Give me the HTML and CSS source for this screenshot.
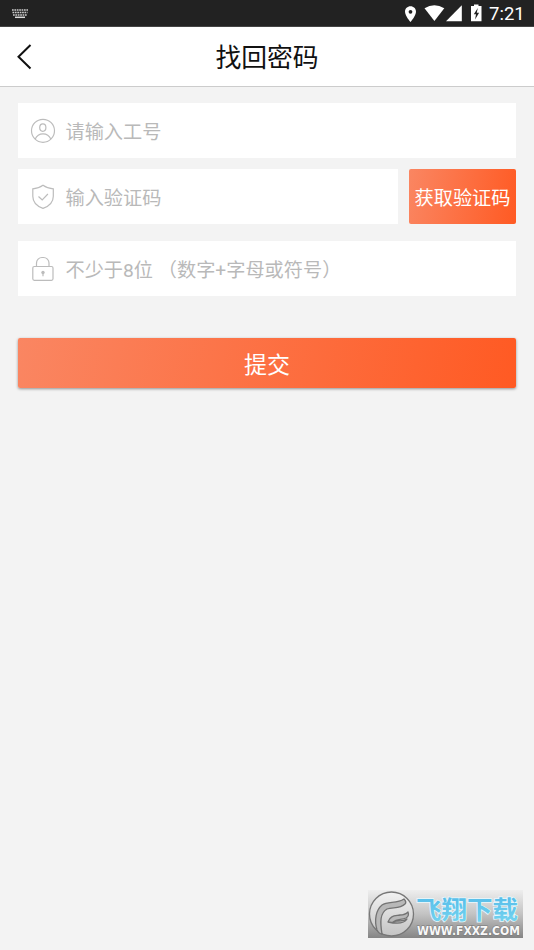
FILE: index.html
```html
<!DOCTYPE html>
<html lang="zh-CN">
<head>
<meta charset="utf-8">
<meta name="viewport" content="width=device-width, initial-scale=1">
<title>找回密码</title>
<link rel="stylesheet" href="styles.css">
</head>
<body>
<div class="status">
  <svg class="keyboard" width="18" height="10" viewBox="0 0 18 10"><path d="M1 1h16M1.500 3.500h15M2 6h14" stroke="#ccc" stroke-width="1.400" stroke-dasharray="1.700 .7"/><path d="M4 8.300h10" stroke="#ddd" stroke-width="1.500"/></svg>
  <svg class="signals" width="82" height="20" viewBox="0 0 82 20" fill="#fff">
    <path fill-rule="evenodd" d="M8.500 3.300c-3.100 0-5.500 2.400-5.500 5.400 0 4 5.500 10.300 5.500 10.300S14 12.700 14 8.700c0-3-2.400-5.400-5.500-5.400zm0 3.600a1.900 1.900 0 1 1 0 3.800 1.900 1.900 0 0 1 0-3.800z"/>
    <path d="M22.500 5.300Q32.300-1 42.300 5.300L32.400 18z"/>
    <path d="M59.800 2.300V18.200H44z"/>
    <path fill-rule="evenodd" d="M69 3h3V1.500h4.500V3h3v15.200H69zM75.800 5l-4 6.300H74l-.9 5.100 4-6.700h-2.300z"/>
  </svg>
  <span class="time">7:21</span>
</div>
<header class="header">
  <svg class="back" width="18" height="28" viewBox="0 0 18 28"><path d="M14.500 2 2.500 13.800l12 11.700" fill="none" stroke="#111" stroke-width="2"/></svg>
  <h1>找回密码</h1>
</header>
<main class="form">
  <div class="field">
    <svg class="icon" viewBox="0 0 26 26"><circle cx="13" cy="12.800" r="11.500"/><ellipse cx="12.800" cy="9.600" rx="3.100" ry="3.700"/><path d="M5.200 21.100c1.500-3.600 4.300-5.300 7.800-5.300s6.300 1.700 7.800 5.300"/></svg>
    <span>请输入工号</span>
  </div>
  <div class="row">
    <div class="field">
      <svg class="icon" viewBox="0 0 26 26"><path d="M13 1.300c3 2.200 6.400 3.300 10.300 3.500v7.400c0 5.600-4.300 10-10.300 12.200C7 22.200 2.800 17.800 2.800 12.200V4.800C6.600 4.600 10 3.500 13 1.300z"/><path d="m8.500 12.500 3.700 3.500 5.700-6"/></svg>
      <span>输入验证码</span>
    </div>
    <button class="code" type="button">获取验证码</button>
  </div>
  <div class="field">
    <svg class="icon" viewBox="0 0 26 26"><rect x="2.800" y="10.500" width="20.200" height="13.800" rx="1.500"/><path d="M6.500 10.500V7a5.500 5.500 0 0 1 5.500-5.500h1.500A5.500 5.500 0 0 1 19 7v3.500M13 17v3.300"/><circle class="keyhole" cx="13" cy="16.500" r="1.700"/></svg>
    <span>不少于8位 （数字+字母或符号）</span>
  </div>
  <button class="submit" type="button">提交</button>
</main>
<svg class="watermark" width="155" height="48" viewBox="0 0 155 48">
  <defs>
    <linearGradient id="plate" x1="0" y1="0" x2="0" y2="1"><stop offset="0" stop-color="#eee"/><stop offset=".5" stop-color="#c3c3c3"/><stop offset="1" stop-color="#858585"/></linearGradient>
    <linearGradient id="disc" x1="0" y1="0" x2="0" y2="1"><stop offset="0" stop-color="#f2f2f2"/><stop offset="1" stop-color="#c4c4c4"/></linearGradient>
    <linearGradient id="blue" x1="0" y1="0" x2="0" y2="1"><stop offset="0" stop-color="#50b8e8"/><stop offset="1" stop-color="#78d6f0"/></linearGradient>
  </defs>
  <rect width="155" height="48" fill="url(#plate)"/>
  <circle cx="23.500" cy="24" r="22" fill="url(#disc)" stroke="#777" stroke-width="1.300"/>
  <g fill="#b8b8b8" stroke="#737373" stroke-width="1.300" stroke-linejoin="round">
    <path d="M9 40C6 30 8 20 14 15c6-4 15-1 22-6 2 2 2 4 1 5-5 5-12 3-18 5-7 4-7 13-5 25-3 0-4-2-5-4z"/>
    <path d="M20 32c2-7 8-6 12-7 4 0 6-1 8-3 1 3 0 5-2 6-5 2-9 1-13 4 6-2 9 0 14-3-3 5-10 5-19 3z"/>
  </g>
  <text class="brand" x="48" y="29" textLength="102" lengthAdjust="spacingAndGlyphs">飞翔下载</text>
  <text class="site" x="49" y="45" textLength="103" lengthAdjust="spacingAndGlyphs">WWW.FXXZ.COM</text>
</svg>
</body>
</html>
```
FILE: styles.css
```css
* { box-sizing: border-box; }

body {
  margin: 0;
  min-height: 950px;
  background: #f3f3f3;
  font-family: Roboto, "Noto Sans CJK SC", sans-serif;
}

.status {
  display: flex;
  align-items: flex-start;
  height: 27px;
  padding: 3px 9px 0 11px;
  background: #222;
  border-bottom: 1px solid #444;
  color: #fff;
}

.keyboard { margin-top: 6px; }
.signals { margin-left: auto; }

.time {
  width: 36px;
  margin-left: 5px;
  font-size: 18.500px;
  line-height: 22px;
  font-weight: 400;
}

.header {
  display: grid;
  grid-template-columns: 18px 1fr 18px;
  align-items: center;
  height: 60px;
  padding: 0 16px;
  background: #fff;
  border-bottom: 1px solid #ccc;
}

.header h1 {
  margin: 0;
  padding-top: 2px;
  font-size: 25.800px;
  font-weight: 400;
  line-height: 36px;
  text-align: center;
  color: #111;
}

.form { padding: 16px 18px 0; }

.row {
  display: flex;
  gap: 11px;
  margin: 11px 0 17px;
}

.row .field { flex: 1; }

.field {
  display: flex;
  align-items: center;
  height: 55px;
  padding-left: 12px;
  background: #fff;
  color: #b9b9b9;
  font-size: 19.200px;
  white-space: pre;
}

.icon {
  width: 26px;
  height: 26px;
  margin-right: 9.500px;
  fill: none;
  stroke: #bcbcbc;
  stroke-width: 1.200;
}

.icon .keyhole { fill: #bcbcbc; stroke: none; }

button {
  padding: 0;
  border: 0;
  border-radius: 2px;
  background: linear-gradient(100deg, #fa8662, #ff5a23);
  color: #fff;
  font-family: inherit;
}

.code {
  width: 107px;
  height: 55px;
  font-size: 19.200px;
}

.submit {
  display: block;
  width: 100%;
  height: 50px;
  margin-top: 42px;
  font-size: 23px;
  box-shadow: 0 1px 3px rgba(0, 0, 0, .4);
}

.watermark {
  position: absolute;
  left: 368px;
  top: 890px;
  overflow: visible;
}

.brand {
  font: 700 25px "Noto Sans CJK SC", sans-serif;
  fill: url(#blue);
  stroke: #e8f8fd;
  stroke-width: 1.500px;
  paint-order: stroke;
}

.site {
  font: 700 11.500px "DejaVu Sans", sans-serif;
  fill: #f8f8f8;
  stroke: #777;
  stroke-width: 1px;
  paint-order: stroke;
}
```
